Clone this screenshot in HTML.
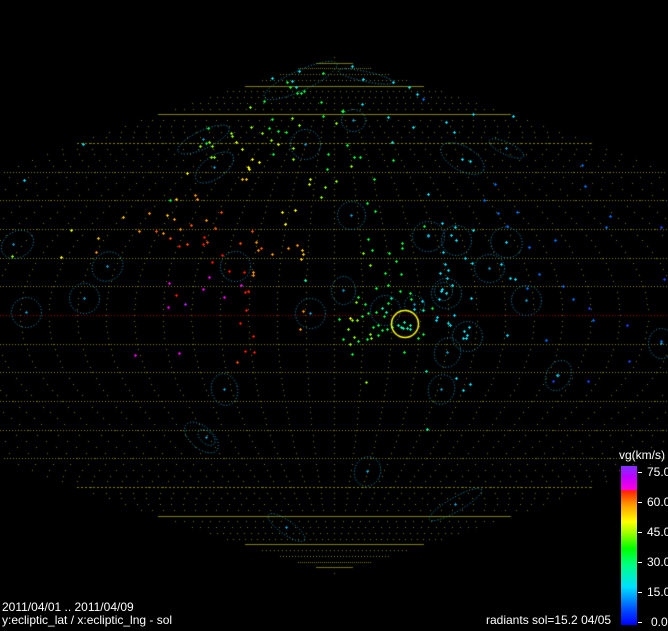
<!DOCTYPE html>
<html><head><meta charset="utf-8"><style>
html,body{margin:0;padding:0;background:#000;width:668px;height:631px;overflow:hidden}
#w{position:relative;width:668px;height:631px}
canvas{position:absolute;left:0;top:0}
.t{position:absolute;color:#fff;font:12px "Liberation Sans",sans-serif;line-height:12px;white-space:nowrap}
#cb{position:absolute;left:621px;top:466px;width:16px;height:159px;background:linear-gradient(to top,#0000ff 0%,#0050ff 10%,#00e0ff 24%,#00ff80 38%,#00ff00 48%,#a0ff00 58%,#ffff00 65%,#ffa000 75%,#ff2000 84.5%,#ff00e0 85%,#c000ff 93%,#8030ff 100%)}
.tk{position:absolute;left:638px;width:4px;height:1px;background:#fff}
</style></head><body><div id="w">
<canvas id="c" width="668" height="631"></canvas>
<div id="cb"></div>
<div class="tk" style="top:472px"></div><div class="tk" style="top:502px"></div><div class="tk" style="top:532px"></div><div class="tk" style="top:562px"></div><div class="tk" style="top:592px"></div><div class="tk" style="top:622px"></div>
<div class="t" style="left:619px;top:449px">vg(km/s)</div>
<div class="t" style="left:647px;top:466px">75.0</div>
<div class="t" style="left:647px;top:496px">60.0</div>
<div class="t" style="left:647px;top:526px">45.0</div>
<div class="t" style="left:647px;top:556px">30.0</div>
<div class="t" style="left:647px;top:586px">15.0</div>
<div class="t" style="left:651px;top:616px">0.0</div>
<div class="t" style="left:2px;top:601px">2011/04/01 .. 2011/04/09</div>
<div class="t" style="left:2px;top:614px">y:ecliptic_lat / x:ecliptic_lng - sol</div>
<div class="t" style="left:486px;top:614px">radiants sol=15.2 04/05</div>
</div>
<script>
var cv=document.getElementById('c'),x=cv.getContext('2d');
x.fillStyle='#000';x.fillRect(0,0,668,631);
var CX=334,CY=315,W=514,H=258,D=Math.PI/180;
function P(L,la){return [CX+W*(L/180)*Math.cos(la*D),CY-H*la/90];}
x.fillStyle='#767600';
for(var L=-180;L<=180;L+=10){for(var la=-90;la<=90;la+=2){var p=P(L,la);if(p[0]>=0&&p[0]<668)x.fillRect(Math.round(p[0]),Math.round(p[1]),1,1);}}
for(var la=-80;la<=80;la+=10){var y=Math.round(CY-H*la/90),h=W*Math.cos(la*D),x0=Math.max(0,Math.round(CX-h)),x1=Math.min(668,Math.round(CX+h));
 if(Math.abs(la)>=70){x.fillStyle='#808000';x.fillRect(x0,y,x1-x0,1);}
 else{x.fillStyle=la==0?'#900000':'#808000';var st=Math.abs(la)==60?4:3;for(var i=x0;i<x1;i+=st){x.fillRect(i,y,Math.abs(la)==60?2:1,1);}}}
var C={c:'#00e8ff',b:'#0070ff',B:'#2040ff',g:'#00ff40',G:'#00ffb0',l:'#90ff00',Y:'#d8ff00',y:'#ffff00',O:'#ffc800',o:'#ff9800',R:'#ff5000',r:'#ff1800',m:'#ff00ff',p:'#c020ff',d:'#1898c8'};
var E=[[203,139,28,9,-25],[214,167,22,11,-35],[305,144,15,15,0],[17,244,17,13,-30],[107,266,16,14,-35],[84,298,15,15,0],[26,312,15,15,0],[235,266,15,15,0],[310,313,15,15,0],
[353,120,12,11,0],[462,158,24,12,30],[506,148,19,6,25],[351,215,14,14,0],[428,236,16,15,0],[456,240,15,15,0],[506,242,16,15,30],[489,268,15,14,0],[446,293,15,15,0],[443,291,9,9,0],[414,304,10,9,0],[385,310,15,15,0],[526,300,15,15,0],[467,336,15,15,0],[447,352,13,15,20],[343,290,12,14,0],[661,343,13,15,0],
[224,389,13,16,-15],[441,389,13,15,20],[558,375,12,16,30],[201,437,20,11,40],[206,437,10,6,40],[367,471,13,15,20],[455,504,30,7,-30],[286,527,22,7,35],[300,80,40,10,-25],[365,76,28,5,12]];
x.strokeStyle='#18a8d8';x.lineWidth=1;x.setLineDash([1,2]);
E.forEach(function(e){x.beginPath();x.ellipse(e[0]+.5,e[1]+.5,e[2],e[3],e[4]*D,0,2*Math.PI);x.stroke();});
x.setLineDash([]);
var S="83,144,c;24,180,c;272,119,g;292,118,l;323,116,g;208,128,g;251,127,l;269,128,g;278,131,g;286,132,g;299,125,l;231,133,l;232,136,l;262,133,l;203,139,g;209,142,l;206,143,g;212,146,l;200,146,l;236,142,Y;271,140,l;278,144,Y;242,149,Y;293,148,l;328,154,g;273,154,g;211,157,l;214,157,l;293,159,l;252,159,y;259,162,y;248,167,y;249,169,y;327,169,g;187,173,y;242,179,O;246,179,O;310,179,Y;309,184,Y;325,187,l;195,195,o;197,199,o;176,199,O;170,200,g;321,197,l;123,217,O;149,213,o;167,215,O;174,219,o;221,212,R;206,220,o;282,212,y;295,210,y;285,224,y;191,225,R;180,229,o;215,228,R;139,231,o;156,231,R;163,233,o;170,238,R;252,231,R;204,237,r;207,242,R;203,244,r;187,244,R;179,246,r;240,243,R;256,242,o;261,248,R;258,250,o;272,254,o;288,248,o;297,245,o;302,250,O;303,254,O;301,259,O;98,238,O;71,230,Y;96,252,o;61,257,y;12,256,l;222,255,r;212,262,r;229,271,r;244,272,r;253,272,o;253,275,o;305,280,G;209,277,m;169,283,m;241,285,m;203,289,m;224,297,m;245,292,r;248,291,r;176,295,r;185,304,p;168,307,m;246,310,r;303,311,o;240,323,r;300,329,o;253,336,r;245,351,r;254,352,r;237,362,R;135,355,m;179,353,m;"+
"342,111,g;336,123,l;388,117,c;413,127,c;446,122,c;454,132,c;473,114,c;513,116,c;347,145,g;392,142,c;354,157,g;360,157,g;393,160,g;351,166,l;462,159,c;470,161,c;582,165,b;336,181,l;374,179,g;495,184,b;585,186,b;428,194,c;484,200,b;367,203,g;375,211,g;498,213,b;517,212,b;610,216,b;507,226,b;606,227,b;661,227,B;424,226,g;442,223,c;455,227,c;473,230,c;428,235,c;451,235,c;456,240,c;506,242,c;555,240,b;529,247,b;368,239,g;402,243,g;402,248,g;372,250,g;363,253,l;389,253,g;443,252,c;465,258,c;396,261,g;370,265,l;445,264,c;472,263,c;489,268,c;501,264,c;385,273,g;401,274,g;448,270,c;440,273,c;539,274,b;510,278,c;515,279,c;664,279,B;388,285,g;447,278,c;452,285,c;563,286,b;376,288,g;400,291,g;410,293,g;442,289,c;446,293,c;441,291,c;527,288,b;471,298,c;358,297,g;356,302,l;365,304,g;388,303,g;391,298,G;411,299,g;422,301,c;439,299,c;526,300,c;573,299,b;589,308,B;432,308,g;382,308,G;386,312,G;376,312,g;368,313,g;384,316,g;414,309,c;423,310,G;454,315,c;339,319,g;350,318,y;352,320,l;357,320,l;362,316,g;437,317,c;436,320,c;378,325,g;373,327,g;382,330,g;387,329,g;392,327,g;398,325,G;401,327,G;403,328,G;407,328,G;410,325,G;410,329,G;404,322,G;448,323,c;450,325,c;469,327,c;464,331,c;466,338,c;467,335,c;463,338,c;348,329,l;370,334,l;371,338,l;354,337,l;343,339,g;358,341,g;367,339,g;378,335,g;418,338,g;423,334,g;350,344,l;352,354,g;404,352,g;507,335,c;546,340,b;627,325,B;593,320,b;661,341,b;"+
"272,78,c;299,71,c;287,82,g;292,81,c;323,73,g;352,66,c;363,79,c;393,82,c;409,87,c;417,94,c;423,99,b;290,87,g;296,87,c;297,93,g;301,93,g;304,91,g;264,101,g;321,102,g;362,104,c;343,111,g;250,107,l;"+
"426,371,G;366,382,l;427,429,G;456,378,c;463,390,c;470,384,c;557,375,c;553,381,B;588,381,B;629,361,B;"+
"203,139,d;214,167,d;305,144,d;13,244,d;107,266,d;84,298,d;26,312,d;310,313,d;353,120,d;351,215,d;506,148,d;428,236,d;489,268,d;414,304,d;526,300,d;447,352,d;441,389,d;224,389,d;206,437,d;367,471,d;455,504,d;286,527,d;343,290,d;661,343,d;558,375,d";
S.split(';').forEach(function(s){var a=s.split(',');var px=+a[0],py=+a[1];x.fillStyle=C[a[2]];x.fillRect(px-1,py,3,1);x.fillRect(px,py-1,1,3);});
x.strokeStyle='#ffff00';x.lineWidth=1.5;x.beginPath();x.arc(405,324,13.5,0,2*Math.PI);x.stroke();
</script>
</body></html>
